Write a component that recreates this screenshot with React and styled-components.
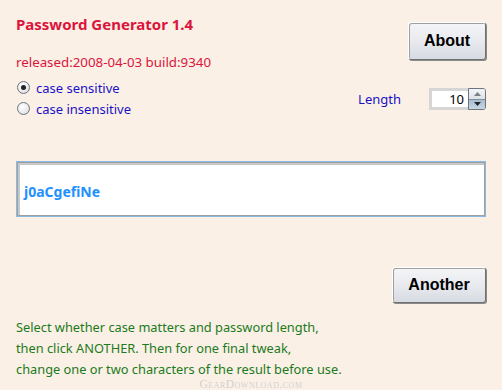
import React, { useState } from 'react';
import styled, { createGlobalStyle } from 'styled-components';

const Global = createGlobalStyle`
  html, body { margin: 0; padding: 0; background: #faf0e6; }
  body { font-family: "Noto Sans", "Liberation Sans", sans-serif; }
`;

const Page = styled.div`
  width: 502px;
  height: 390px;
  box-sizing: border-box;
  padding: 14px 16px 0 16px;
  background: #faf0e6;
  display: flex;
  flex-direction: column;
  position: relative;
  overflow: hidden;
`;

const Top = styled.div`
  display: flex;
  justify-content: space-between;
`;

const LeftCol = styled.div`
  display: flex;
  flex-direction: column;
`;

const Title = styled.div`
  color: #dc143c;
  font-weight: bold;
  font-size: 15px;
  line-height: 21px;
`;

const Released = styled.div`
  color: #dc143c;
  font-size: 13.3px;
  line-height: 18px;
  margin-top: 18px;
`;

const RadioRow = styled.label`
  display: flex;
  align-items: center;
  gap: 6px;
  height: 21px;
  color: #1a10c8;
  font-size: 13px;
  cursor: pointer;
  margin-top: ${p => p.first ? '6px' : '0'};
`;

const RadioDot = styled.span`
  width: 13px;
  height: 13px;
  border-radius: 50%;
  border: 1px solid #6f7479;
  background: radial-gradient(circle at 40% 35%, #ffffff 0%, #e7e9ec 60%, #c9cdd2 100%);
  display: flex;
  align-items: center;
  justify-content: center;
  box-sizing: border-box;
  margin-left: 1px;
  &::after {
    content: '';
    width: 5px;
    height: 5px;
    border-radius: 50%;
    background: ${p => p.checked ? '#222' : 'transparent'};
  }
`;

const RightCol = styled.div`
  display: flex;
  flex-direction: column;
  align-items: flex-end;
  padding-top: 8px;
`;

const Button = styled.button`
  width: ${p => p.w}px;
  height: ${p => p.h}px;
  font-family: "Liberation Sans", Arial, sans-serif;
  font-weight: bold;
  font-size: 16px;
  color: #000;
  border: 1px solid #707070;
  border-top-color: #fff;
  border-left-color: #fff;
  border-radius: 3px;
  box-shadow: inset 1px 1px 0 #a0a0a0, 1px 1px 0 #8a8a8a;
  background: linear-gradient(#f4f5f7 0%, #e8eaee 50%, #d7dbe2 100%);
  cursor: pointer;
  padding: 0;
`;

const LengthRow = styled.div`
  display: flex;
  align-items: center;
  margin-top: 28px;
`;

const LengthLabel = styled.span`
  color: #1a10c8;
  font-size: 13px;
  margin-right: 28px;
`;

const Spinner = styled.div`
  display: flex;
  height: 22px;
  align-items: stretch;
`;

const SpinInput = styled.div`
  width: 39px;
  box-sizing: border-box;
  background: #fff;
  border: 3px solid #d6d6d6;
  border-right: none;
  font-size: 13px;
  color: #000;
  text-align: right;
  padding-right: 4px;
  line-height: 16px;
`;

const SpinButtons = styled.div`
  width: 18px;
  display: flex;
  flex-direction: column;
  border: 1px solid #6b7480;
  border-radius: 0 3px 3px 0;
  overflow: hidden;
  box-sizing: border-box;
`;

const SpinBtn = styled.div`
  flex: 1;
  display: flex;
  align-items: center;
  justify-content: center;
  background: ${p => p.down ? 'linear-gradient(#a9bccf, #c9d6e3)' : 'linear-gradient(#f2f4f6, #dde2e8)'};
  border-top: ${p => p.down ? '1px solid #8090a0' : 'none'};
`;

const Output = styled.div`
  margin-top: 42px;
  height: 56px;
  box-sizing: border-box;
  border: 1px solid #8cb8e4;
  box-shadow: inset 0 0 0 1px #a0a0a0, inset 1px 1px 0 2px #c8c8c8;
  background: #fff;
  display: flex;
  align-items: center;
  padding: 5px 7px 0;
  color: #1e90ff;
  font-weight: bold;
  font-size: 14px;
`;

const Actions = styled.div`
  display: flex;
  justify-content: flex-end;
  margin-top: 50px;
`;

const Help = styled.div`
  margin-top: 16px;
  display: flex;
  flex-direction: column;
  gap: 5px;
  color: #1c7a1c;
  font-size: 12.8px;
`;

const HelpLine = styled.div`
  line-height: 16px;
  white-space: nowrap;
`;

const Watermark = styled.div`
  position: absolute;
  left: 0;
  right: 0;
  bottom: 0;
  text-align: center;
  font-family: "Liberation Serif", serif;
  font-variant: small-caps;
  font-size: 11.5px;
  line-height: 12px;
  color: #d2ccc6;
  letter-spacing: 0.5px;
  text-shadow: 0 0 1px #ffffff;
`;

export default function App() {
  const [sensitive, setSensitive] = useState(true);
  return (
    <>
      <Global />
      <Page>
        <Top>
          <LeftCol>
            <Title>Password Generator 1.4</Title>
            <Released>released:2008-04-03 build:9340</Released>
            <RadioRow first onClick={() => setSensitive(true)}>
              <RadioDot checked={sensitive} />
              case sensitive
            </RadioRow>
            <RadioRow onClick={() => setSensitive(false)}>
              <RadioDot checked={!sensitive} />
              case insensitive
            </RadioRow>
          </LeftCol>
          <RightCol>
            <Button w={78} h={38}>About</Button>
            <LengthRow>
              <LengthLabel>Length</LengthLabel>
              <Spinner>
                <SpinInput>10</SpinInput>
                <SpinButtons>
                  <SpinBtn>
                    <svg width="7" height="4" viewBox="0 0 7 4"><path d="M0 4 L3.5 0 L7 4 Z" fill="#7a7f86" /></svg>
                  </SpinBtn>
                  <SpinBtn down>
                    <svg width="7" height="4" viewBox="0 0 7 4"><path d="M0 0 L3.5 4 L7 0 Z" fill="#1c2430" /></svg>
                  </SpinBtn>
                </SpinButtons>
              </Spinner>
            </LengthRow>
          </RightCol>
        </Top>
        <Output>j0aCgefiNe</Output>
        <Actions>
          <Button w={94} h={36}>Another</Button>
        </Actions>
        <Help>
          <HelpLine>Select whether case matters and password length,</HelpLine>
          <HelpLine>then click ANOTHER. Then for one final tweak,</HelpLine>
          <HelpLine>change one or two characters of the result before use.</HelpLine>
        </Help>
        <Watermark>GearDownload.com</Watermark>
      </Page>
    </>
  );
}
